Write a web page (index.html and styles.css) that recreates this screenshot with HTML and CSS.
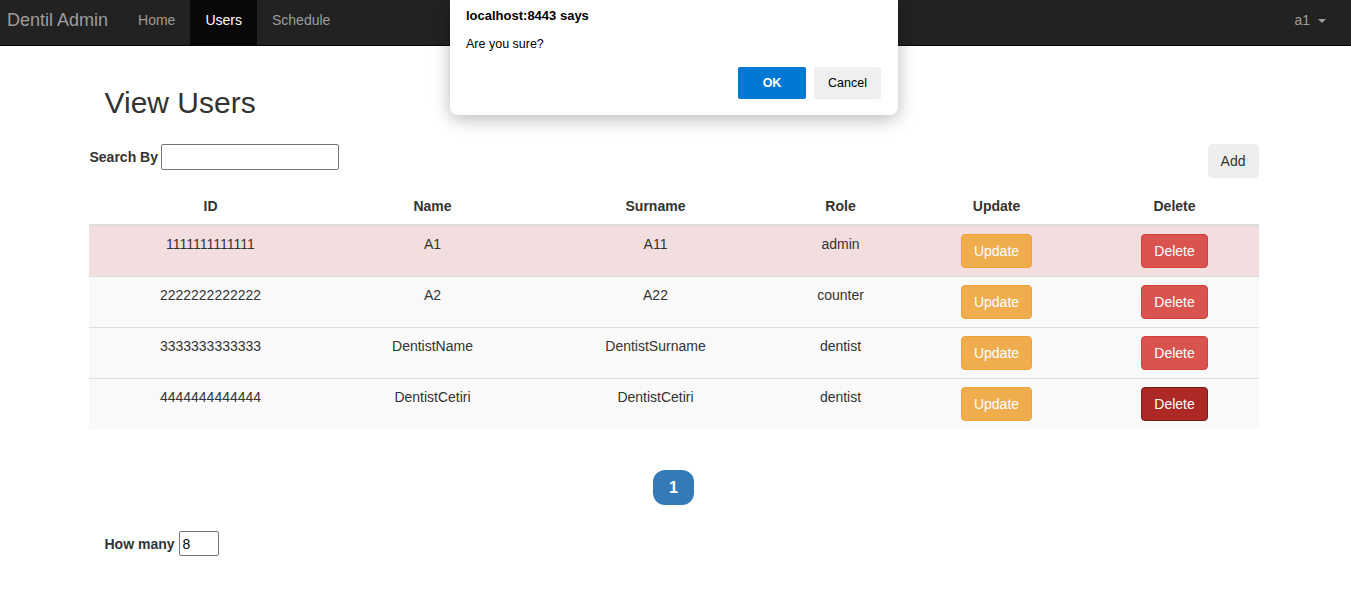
FILE: index.html
```html
<!DOCTYPE html>
<html>
<head>
<meta charset="utf-8">
<title>Dentil Admin</title>
<link rel="stylesheet" href="styles.css">
</head>
<body>
<nav class="navbar">
  <a class="brand" href="#">Dentil Admin</a>
  <ul class="nav">
    <li><a href="#">Home</a></li>
    <li class="active"><a href="#">Users</a></li>
    <li><a href="#">Schedule</a></li>
  </ul>
  <div class="nav-right"><a href="#">a1 <span class="caret"></span></a></div>
</nav>

<main class="container">
  <h2 class="title">View Users</h2>
  <div class="toolbar">
    <div class="search">
      <label class="lbl">Search By</label>
      <input class="search-input" type="text">
    </div>
    <button class="btn btn-default">Add</button>
  </div>

  <table class="users">
    <colgroup>
      <col style="width:244px"><col style="width:200px"><col style="width:246px"><col style="width:124px"><col style="width:188px"><col style="width:168px">
    </colgroup>
    <thead>
      <tr><th>ID</th><th>Name</th><th>Surname</th><th>Role</th><th>Update</th><th>Delete</th></tr>
    </thead>
    <tbody>
      <tr class="danger"><td>1111111111111</td><td>A1</td><td>A11</td><td>admin</td><td><button class="btn btn-warning">Update</button></td><td><button class="btn btn-danger">Delete</button></td></tr>
      <tr><td>2222222222222</td><td>A2</td><td>A22</td><td>counter</td><td><button class="btn btn-warning">Update</button></td><td><button class="btn btn-danger">Delete</button></td></tr>
      <tr><td>3333333333333</td><td>DentistName</td><td>DentistSurname</td><td>dentist</td><td><button class="btn btn-warning">Update</button></td><td><button class="btn btn-danger">Delete</button></td></tr>
      <tr><td>4444444444444</td><td>DentistCetiri</td><td>DentistCetiri</td><td>dentist</td><td><button class="btn btn-warning">Update</button></td><td><button class="btn btn-danger active">Delete</button></td></tr>
    </tbody>
  </table>

  <div class="pager"><a class="page" href="#">1</a></div>

  <div class="howmany">
    <label class="lbl">How many</label>
    <input class="count-input" type="text" value="8">
  </div>
</main>

<div class="alert-dialog">
  <div class="alert-title">localhost:8443 says</div>
  <div class="alert-msg">Are you sure?</div>
  <div class="alert-actions">
    <button class="abtn abtn-ok">OK</button>
    <button class="abtn abtn-cancel">Cancel</button>
  </div>
</div>
</body>
</html>
```

FILE: styles.css
```css
* { box-sizing: border-box; }
html, body { margin: 0; padding: 0; }
body {
  font-family: "Liberation Sans", Arial, sans-serif;
  font-size: 14px;
  line-height: 20px;
  color: #333;
  background: #fff;
}
a { text-decoration: none; }

.navbar {
  display: flex;
  align-items: stretch;
  height: 46px;
  background: #222;
  border-bottom: 1px solid #080808;
}
.brand {
  display: block;
  padding: 10px 15px 0 7px;
  font-size: 18px;
  line-height: 20px;
  color: #9d9d9d;
}
.nav {
  display: flex;
  list-style: none;
  margin: 0;
  padding: 0;
}
.nav li a {
  display: block;
  height: 100%;
  padding: 10px 15px 0;
  color: #9d9d9d;
}
.nav li.active a { background: #080808; color: #fff; }
.nav-right { margin-left: auto; display: flex; }
.nav-right a {
  display: block;
  padding: 10px 25px 0 15px;
  color: #9d9d9d;
}
.caret {
  display: inline-block;
  width: 0; height: 0;
  margin-left: 4px;
  vertical-align: middle;
  border-top: 4px solid #9d9d9d;
  border-left: 4px solid transparent;
  border-right: 4px solid transparent;
}

.container {
  width: 1170px;
  margin: 0 auto;
  padding: 0;
  position: relative;
  left: -2px;
}
.title {
  margin: 40px 0 25px 16px;
  font-size: 30px;
  line-height: 33px;
  font-weight: 500;
}
.toolbar {
  display: flex;
  justify-content: space-between;
  align-items: flex-start;
  margin-bottom: 10px;
}
.search { display: flex; align-items: center; gap: 3px; padding-left: 1px; }
.lbl { font-weight: bold; }
.search-input {
  width: 178px; height: 26px;
  border: 1px solid #767676;
  border-radius: 2px;
  font: inherit;
}
.btn {
  font-family: inherit;
  font-size: 14px;
  line-height: 20px;
  padding: 6px 12px;
  border: 1px solid transparent;
  border-radius: 4px;
  cursor: pointer;
}
.btn-default { background: #eee; border-color: #eee; color: #333; }
.btn-warning { background: #f0ad4e; border-color: #eea236; color: #fff; }
.btn-danger { background: #d9534f; border-color: #d43f3a; color: #fff; }
.btn-danger.active { background: #ac2925; border-color: #761c19; }

.users {
  width: 1170px;
  border-collapse: collapse;
  table-layout: fixed;
}
.users th, .users td {
  padding: 8px;
  text-align: center;
  vertical-align: top;
}
.users th { border-bottom: 2px solid #ddd; }
.users td { border-top: 1px solid #ddd; }
.users tbody tr { background: #f9f9f9; }
.users tbody tr.danger { background: #f2dede; }

.pager { display: flex; justify-content: center; margin: 41px 0 26px; }
.page {
  display: flex; align-items: center; justify-content: center;
  width: 41px; height: 35px;
  border-radius: 12px;
  background: #337ab7;
  color: #fff;
  font-weight: bold;
  font-size: 16px;
}
.howmany { display: flex; align-items: center; gap: 4px; padding-left: 16px; }
.count-input {
  width: 40px; height: 25px;
  border: 1px solid #767676;
  border-radius: 2px;
  font: inherit;
  padding: 0 3px;
}

.alert-dialog {
  position: absolute;
  top: 0; left: 450px;
  width: 448px;
  padding: 7px 17px 16px 16px;
  background: #fff;
  border-radius: 0 0 8px 8px;
  box-shadow: 0 4px 18px rgba(0,0,0,0.28);
  color: #000;
}
.alert-title { font-size: 13px; font-weight: bold; line-height: 18px; }
.alert-msg { font-size: 12.5px; line-height: 16px; margin-top: 11px; }
.alert-actions { display: flex; justify-content: flex-end; gap: 8px; margin-top: 15px; }
.abtn {
  height: 32px;
  border: none;
  border-radius: 2px;
  font-family: "Liberation Sans", Arial, sans-serif;
  font-size: 12.5px;
}
.abtn-ok { width: 68px; background: #0078d4; color: #fff; font-weight: bold; }
.abtn-cancel { width: 67px; background: #efefef; color: #000; }
```
